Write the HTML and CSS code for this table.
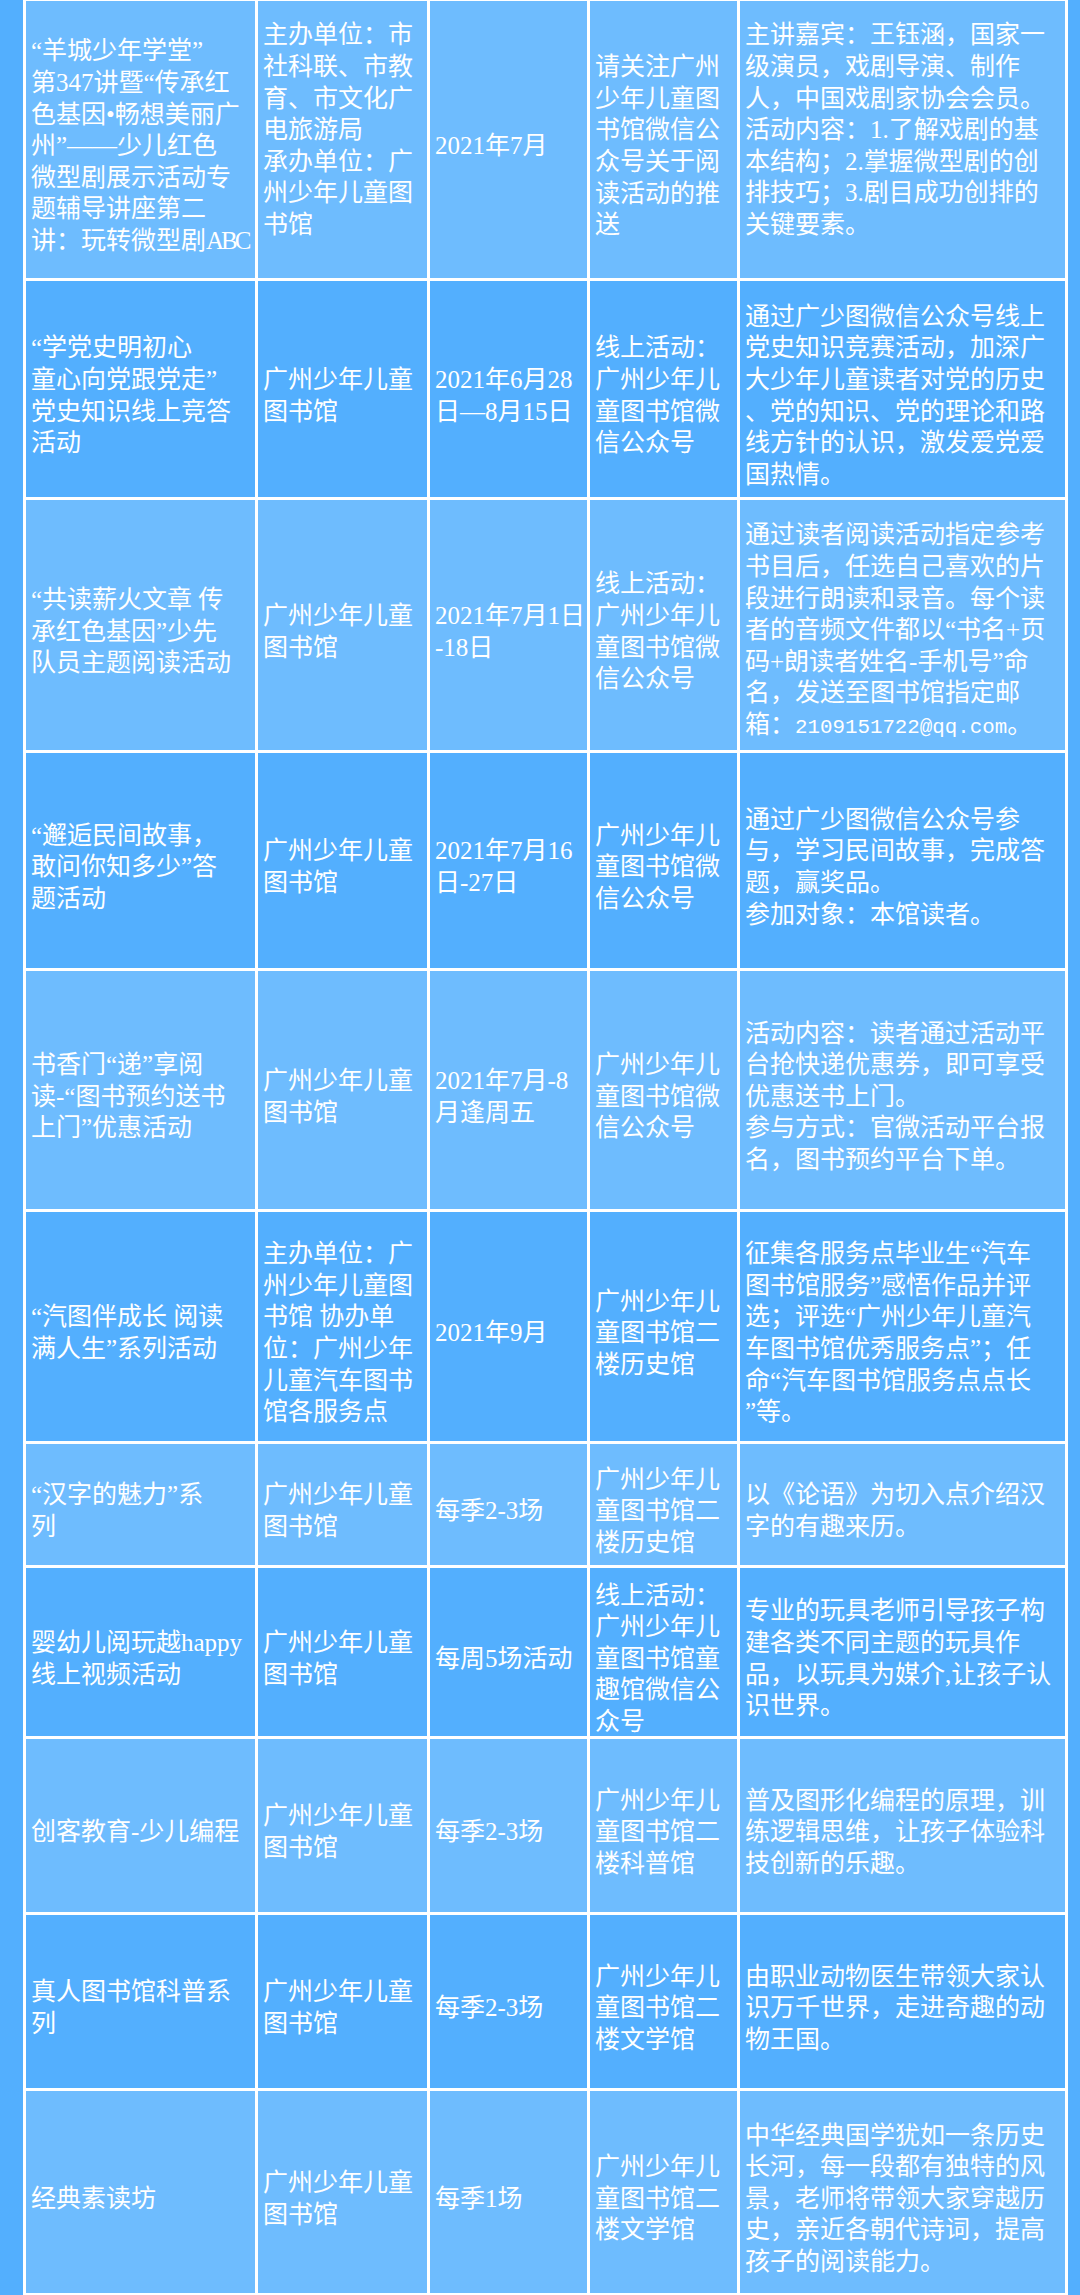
FILE: index.html
```html
<!DOCTYPE html>
<html lang="zh-CN">
<head>
<meta charset="utf-8">
<title>活动列表</title>
<link rel="stylesheet" href="styles.css">
</head>
<body>
<div class="page">
  <div class="sheet">
    <!-- row 1 -->
    <div class="cell light"><p>“羊城少年学堂”<br>第347讲暨“传承红<br>色基因•畅想美丽广<br>州”——少儿红色<br>微型剧展示活动专<br>题辅导讲座第二<br>讲：玩转微型剧<span class="tight">ABC</span></p></div>
    <div class="cell light"><p class="tail">主办单位：市<br>社科联、市教<br>育、市文化广<br>电旅游局<br>承办单位：广<br>州少年儿童图<br>书馆</p></div>
    <div class="cell light"><p>2021年7月</p></div>
    <div class="cell light"><p>请关注广州<br>少年儿童图<br>书馆微信公<br>众号关于阅<br>读活动的推<br>送</p></div>
    <div class="cell light"><p class="tail">主讲嘉宾：王钰涵，国家一<br>级演员，戏剧导演、制作<br>人，中国戏剧家协会会员。<br>活动内容：1.了解戏剧的基<br>本结构；2.掌握微型剧的创<br>排技巧；3.剧目成功创排的<br>关键要素。</p></div>

    <!-- row 2 -->
    <div class="cell dark"><p>“学党史明初心<br>童心向党跟党走”<br>党史知识线上竞答<br>活动</p></div>
    <div class="cell dark"><p>广州少年儿童<br>图书馆</p></div>
    <div class="cell dark"><p>2021年6月28<br>日—8月15日</p></div>
    <div class="cell dark"><p>线上活动：<br>广州少年儿<br>童图书馆微<br>信公众号</p></div>
    <div class="cell dark"><p>通过广少图微信公众号线上<br>党史知识竞赛活动，加深广<br>大少年儿童读者对党的历史<br>、党的知识、党的理论和路<br>线方针的认识，激发爱党爱<br>国热情。</p></div>

    <!-- row 3 -->
    <div class="cell light"><p>“共读薪火文章 传<br>承红色基因”少先<br>队员主题阅读活动</p></div>
    <div class="cell light"><p>广州少年儿童<br>图书馆</p></div>
    <div class="cell light"><p>2021年7月1日<br>-18日</p></div>
    <div class="cell light"><p>线上活动：<br>广州少年儿<br>童图书馆微<br>信公众号</p></div>
    <div class="cell light"><p>通过读者阅读活动指定参考<br>书目后，任选自己喜欢的片<br>段进行朗读和录音。每个读<br>者的音频文件都以“书名+页<br>码+朗读者姓名-手机号”命<br>名，发送至图书馆指定邮<br>箱：<span class="latin">2109151722@qq.com</span>。</p></div>

    <!-- row 4 -->
    <div class="cell dark"><p>“邂逅民间故事，<br>敢问你知多少”答<br>题活动</p></div>
    <div class="cell dark"><p>广州少年儿童<br>图书馆</p></div>
    <div class="cell dark"><p>2021年7月16<br>日-27日</p></div>
    <div class="cell dark"><p>广州少年儿<br>童图书馆微<br>信公众号</p></div>
    <div class="cell dark"><p>通过广少图微信公众号参<br>与，学习民间故事，完成答<br>题，赢奖品。<br>参加对象：本馆读者。</p></div>

    <!-- row 5 -->
    <div class="cell light"><p>书香门“递”享阅<br>读-“图书预约送书<br>上门”优惠活动</p></div>
    <div class="cell light"><p>广州少年儿童<br>图书馆</p></div>
    <div class="cell light"><p>2021年7月-8<br>月逢周五</p></div>
    <div class="cell light"><p>广州少年儿<br>童图书馆微<br>信公众号</p></div>
    <div class="cell light"><p>活动内容：读者通过活动平<br>台抢快递优惠券，即可享受<br>优惠送书上门。<br>参与方式：官微活动平台报<br>名，图书预约平台下单。</p></div>

    <!-- row 6 -->
    <div class="cell dark"><p>“汽图伴成长 阅读<br>满人生”系列活动</p></div>
    <div class="cell dark"><p>主办单位：广<br>州少年儿童图<br>书馆 协办单<br>位：广州少年<br>儿童汽车图书<br>馆各服务点</p></div>
    <div class="cell dark"><p>2021年9月</p></div>
    <div class="cell dark"><p>广州少年儿<br>童图书馆二<br>楼历史馆</p></div>
    <div class="cell dark"><p>征集各服务点毕业生“汽车<br>图书馆服务”感悟作品并评<br>选；评选“广州少年儿童汽<br>车图书馆优秀服务点”；任<br>命“汽车图书馆服务点点长<br>”等。</p></div>

    <!-- row 7 -->
    <div class="cell light"><p>“汉字的魅力”系<br>列</p></div>
    <div class="cell light"><p>广州少年儿童<br>图书馆</p></div>
    <div class="cell light"><p>每季2-3场</p></div>
    <div class="cell light"><p>广州少年儿<br>童图书馆二<br>楼历史馆</p></div>
    <div class="cell light"><p>以《论语》为切入点介绍汉<br>字的有趣来历。</p></div>

    <!-- row 8 -->
    <div class="cell dark"><p>婴幼儿阅玩越happy<br>线上视频活动</p></div>
    <div class="cell dark"><p>广州少年儿童<br>图书馆</p></div>
    <div class="cell dark"><p>每周5场活动</p></div>
    <div class="cell dark"><p>线上活动：<br>广州少年儿<br>童图书馆童<br>趣馆微信公<br>众号</p></div>
    <div class="cell dark"><p>专业的玩具老师引导孩子构<br>建各类不同主题的玩具作<br>品，以玩具为媒介,让孩子认<br>识世界。</p></div>

    <!-- row 9 -->
    <div class="cell light"><p>创客教育-少儿编程</p></div>
    <div class="cell light"><p>广州少年儿童<br>图书馆</p></div>
    <div class="cell light"><p>每季2-3场</p></div>
    <div class="cell light"><p>广州少年儿<br>童图书馆二<br>楼科普馆</p></div>
    <div class="cell light"><p>普及图形化编程的原理，训<br>练逻辑思维，让孩子体验科<br>技创新的乐趣。</p></div>

    <!-- row 10 -->
    <div class="cell dark"><p>真人图书馆科普系<br>列</p></div>
    <div class="cell dark"><p>广州少年儿童<br>图书馆</p></div>
    <div class="cell dark"><p>每季2-3场</p></div>
    <div class="cell dark"><p>广州少年儿<br>童图书馆二<br>楼文学馆</p></div>
    <div class="cell dark"><p>由职业动物医生带领大家认<br>识万千世界，走进奇趣的动<br>物王国。</p></div>

    <!-- row 11 -->
    <div class="cell light"><p>经典素读坊</p></div>
    <div class="cell light"><p>广州少年儿童<br>图书馆</p></div>
    <div class="cell light"><p>每季1场</p></div>
    <div class="cell light"><p>广州少年儿<br>童图书馆二<br>楼文学馆</p></div>
    <div class="cell light"><p>中华经典国学犹如一条历史<br>长河，每一段都有独特的风<br>景，老师将带领大家穿越历<br>史，亲近各朝代诗词，提高<br>孩子的阅读能力。</p></div>
  </div>
</div>
</body>
</html>
```

FILE: styles.css
```css
html, body {
  margin: 0;
  padding: 0;
}

body {
  background: #53affe;
  width: 1080px;
  height: 2295px;
  overflow: hidden;
  font-family: "Liberation Serif", "Noto Sans CJK SC", serif;
  color: #ffffff;
}

.page {
  padding-left: 23px;
}

.sheet {
  display: grid;
  width: 1045px;
  box-sizing: border-box;
  grid-template-columns: 229px 169px 157px 147px 325px;
  grid-template-rows: 277px 216px 250px 215px 238px 229px 121px 168px 173px 173px 202px;
  gap: 3px;
  padding: 1px 3px 3px 3px;
  background: #ffffff;
}

.cell {
  display: flex;
  align-items: center;
  box-sizing: border-box;
  padding: 13px 4px 0 5px;
  overflow: visible;
}

.light {
  background: #6ebcfe;
}

.dark {
  background: #53affe;
}

.cell p {
  margin: 0;
  font-size: 25px;
  line-height: 31.6px;
  white-space: nowrap;
  font-weight: 400;
}

.cell p.tail {
  padding-bottom: 32px;
}

.latin {
  font-family: "Liberation Mono", monospace;
  font-size: 20.8px;
}

.tight {
  letter-spacing: -3px;
}
```
